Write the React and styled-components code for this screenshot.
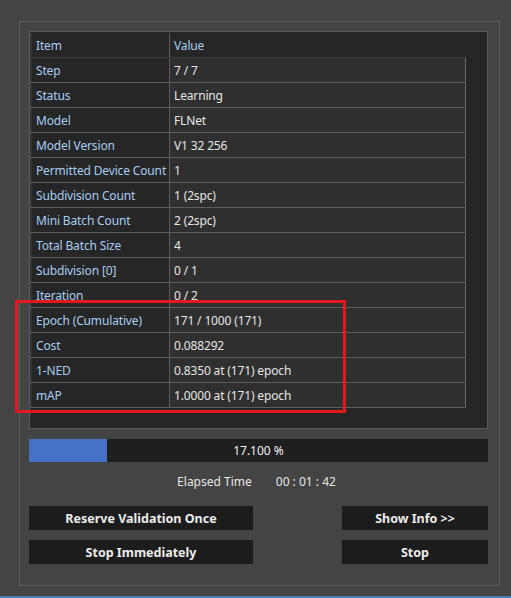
import React from "react";
import styled, { createGlobalStyle } from "styled-components";

const G = createGlobalStyle`
  html,body{margin:0;padding:0;background:#444;}
  body{font-family:"Noto Sans","Open Sans",sans-serif;font-size:12px;}
`;
const Page = styled.div`
  width:511px;height:598px;box-sizing:border-box;padding:21px 11px 0 19px;
  border-bottom:2px solid #4a7ab8;
`;
const Frame = styled.div`
  box-sizing:border-box;width:481px;height:565px;border:1px solid #5e5e5e;
  padding:9px 11px 0 9px;display:flex;flex-direction:column;
`;
const TablePanel = styled.div`
  position:relative;box-sizing:border-box;height:398px;background:#262626;
  border:1px solid #5a5a5a;padding:1px 21px 0 0;
`;
const Table = styled.div`display:flex;flex-direction:column;`;
const Row = styled.div`
  display:grid;grid-template-columns:139px 1fr;height:25px;
  border-bottom:1px solid ${p=>p.$head?"#3a3a3a":"#5c5c5c"};box-sizing:border-box;
`;
const Cell = styled.div`
  display:flex;align-items:center;padding:1px 0 0 4px;line-height:1;white-space:nowrap;
  letter-spacing:-0.15px;
  color:${p=>p.$key?"#a6cdf2":"#e6e6e6"};
  background:${p=>p.$val?(p.$head?"#262626":"#2f2f2f"):"#262626"};
  border-left:${p=>p.$val?"1px solid #5c5c5c":"2px solid #333"};
  ${p=>p.$val&&!p.$head?"border-right:1px solid #6a6a6a;":""}
  ${p=>p.$head&&p.$val?"color:#a6cdf2;":""}
`;
const Highlight = styled.div`
  position:absolute;left:-15px;top:268px;width:325px;height:107px;
  border:3px solid #e3191e;
`;
const Progress = styled.div`
  position:relative;margin-top:10px;height:23px;background:#1f1f1f;
  display:flex;align-items:center;justify-content:center;color:#f0f0f0;
`;
const Fill = styled.div`position:absolute;left:0;top:0;bottom:0;background:#4472c4;`;
const Label = styled.span`position:relative;`;
const Elapsed = styled.div`
  display:flex;justify-content:center;gap:24px;color:#e6e6e6;margin-top:11px;
  padding-right:4px;
`;
const Buttons = styled.div`
  display:grid;grid-template-columns:224px 146px;justify-content:space-between;
  row-gap:10px;margin-top:16px;
`;
const Btn = styled.button`
  height:24px;background:#1c1c1c;border:none;color:#ececec;font-weight:700;
  font-family:inherit;font-size:12.5px;padding:0;
`;

const rows=[["Step","7 / 7"],["Status","Learning"],["Model","FLNet"],["Model Version","V1 32 256"],
["Permitted Device Count","1"],["Subdivision Count","1 (2spc)"],["Mini Batch Count","2 (2spc)"],
["Total Batch Size","4"],["Subdivision [0]","0 / 1"],["Iteration","0 / 2"],
["Epoch (Cumulative)","171 / 1000 (171)"],["Cost","0.088292"],["1-NED","0.8350 at (171) epoch"],["mAP","1.0000 at (171) epoch"]];

export default function App(){
  const pct=17.1;
  return <Page><G/><Frame>
    <TablePanel>
      <Table>
        <Row $head><Cell $key>Item</Cell><Cell $val $head>Value</Cell></Row>
        {rows.map(([k,v])=><Row key={k}><Cell $key>{k}</Cell><Cell $val>{v}</Cell></Row>)}
      </Table>
      <Highlight/>
    </TablePanel>
    <Progress><Fill style={{width:pct+"%"}}/><Label>17.100 %</Label></Progress>
    <Elapsed><span>Elapsed Time</span><span>00 : 01 : 42</span></Elapsed>
    <Buttons>
      <Btn>Reserve Validation Once</Btn><Btn>Show Info &gt;&gt;</Btn>
      <Btn>Stop Immediately</Btn><Btn>Stop</Btn>
    </Buttons>
  </Frame></Page>;
}
